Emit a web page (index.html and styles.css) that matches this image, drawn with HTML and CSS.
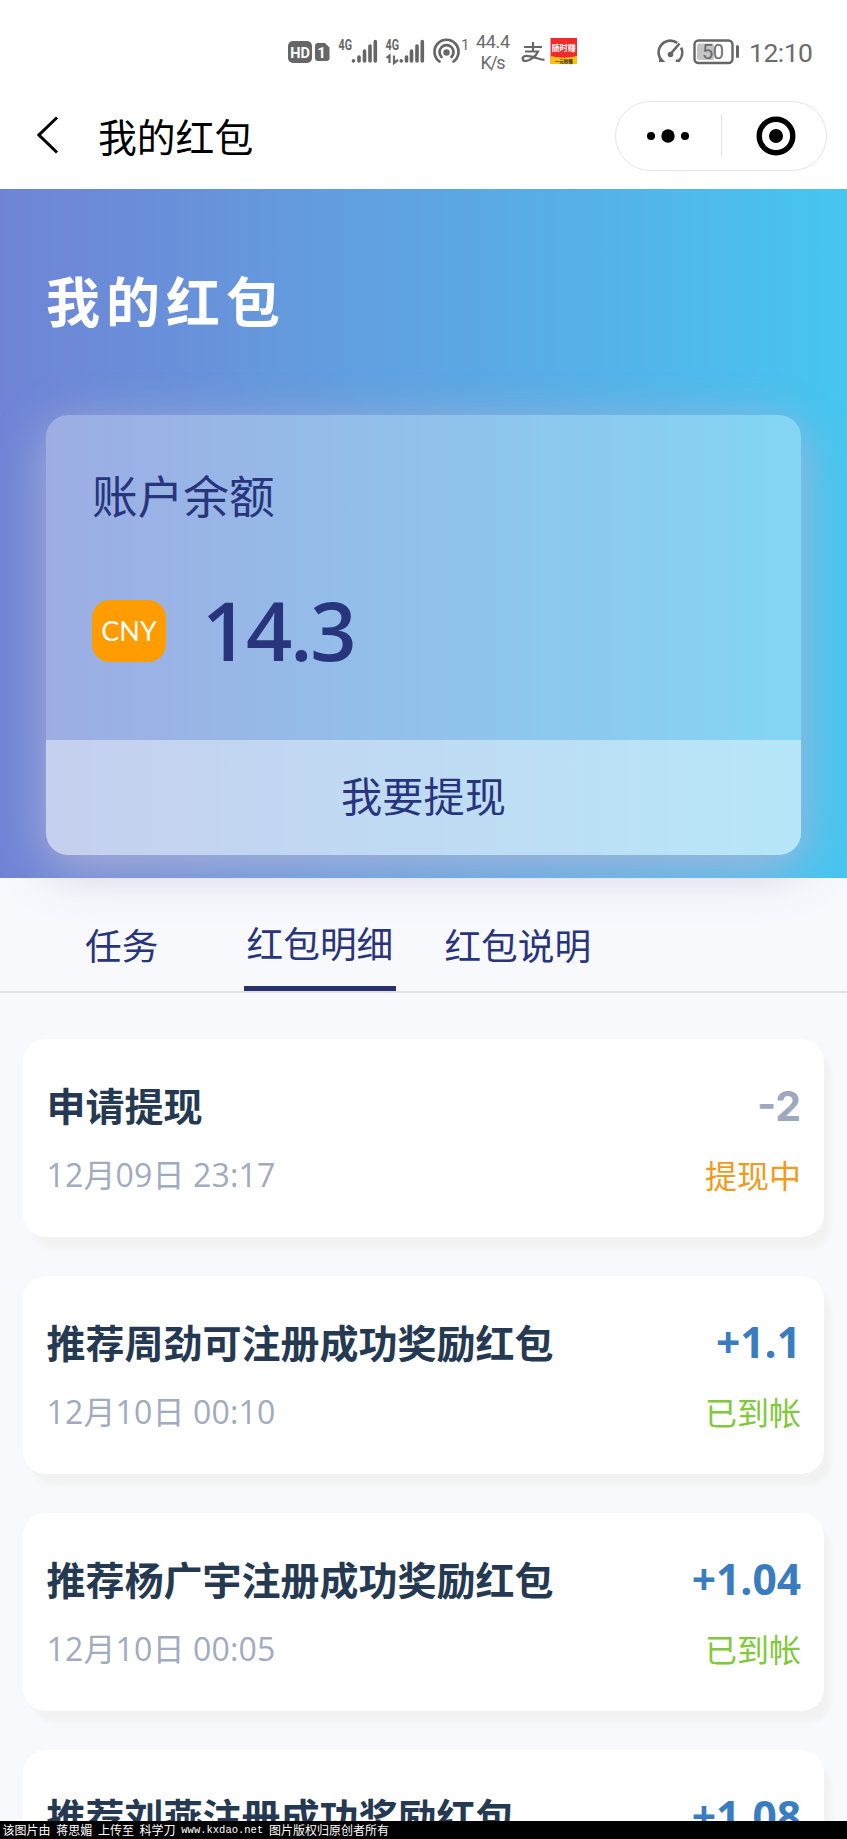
FILE: index.html
```
<!DOCTYPE html>
<html lang="zh-CN">
<head>
<meta charset="utf-8">
<title>我的红包</title>
<link rel="stylesheet" href="styles.css">
</head>
<body>
<div class="statusbar">
  <svg class="status-left" width="290" height="44" viewBox="288 30 290 44">
    <rect x="288" y="41" width="24" height="22" rx="5" fill="#666"/>
    <text x="300" y="57.500" class="badge" text-anchor="middle" font-size="14.500">HD</text>
    <path d="M318 43h7l4.500 4.500V58a3 3 0 0 1-3 3H318a3 3 0 0 1-3-3V46a3 3 0 0 1 3-3z" fill="#666"/>
    <text x="321.500" y="58" class="badge" text-anchor="middle" font-size="15">1</text>
    <text x="338.500" y="50" class="net" textLength="13.500" lengthAdjust="spacingAndGlyphs">4G</text>
    <g stroke="#666" stroke-width="3.600" stroke-linecap="round">
      <path d="M353.500 60.700v.3M359 57v4M364.500 51v10M370 46v15M375.300 41.500v19.500"/>
      <path d="M401.300 60.700v.3M406.500 57v4M411.500 51v10M417 46v15M422.300 41.500v19.500"/>
    </g>
    <text x="385.500" y="50" class="net" textLength="13.500" lengthAdjust="spacingAndGlyphs">4G</text>
    <path d="M386.500 58l3-2.500V63M394 55.500V63l4-3" fill="none" stroke="#666" stroke-width="2.200"/>
    <g fill="none" stroke="#666" stroke-width="2.700" stroke-linecap="round">
      <path d="M439.500 61.500a12 12 0 1 1 14 0"/>
      <path d="M441.500 57a7 7 0 1 1 10 0"/>
    </g>
    <circle cx="446.500" cy="52.500" r="3.200" fill="#666"/>
    <text x="461" y="50" class="light" font-size="15">1</text>
    <text x="476" y="48" class="light" font-size="18" textLength="34">44.4</text>
    <text x="480.500" y="69" class="light" font-size="18" textLength="25">K/s</text>
    <path d="M524 47h18M533 42v9M525 51.500h13c-2 5-8 9-12 9.500-4 .3-4.500-4-1-5 5-1 12 3 19.500 4" fill="none" stroke="#666" stroke-width="2.200"/>
    <rect x="550.500" y="38" width="26.500" height="26" fill="#ef2a2c"/>
    <path d="M550.500 56q13 3.500 26.500 0v8h-26.500z" fill="#ffc20e"/>
    <text x="563.700" y="51" class="app" fill="#fff" font-size="8" text-anchor="middle">随时赚</text>
    <text x="563.700" y="63" class="app" fill="#222" font-size="4.500" text-anchor="middle">一元秒赚</text>
  </svg>
  <svg class="status-right" width="156" height="44" viewBox="657 30 156 44">
    <g fill="none" stroke="#666" stroke-width="2.600">
      <path d="M659 60.800h3.200A11.700 11.700 0 0 1 677.200 42.900M681.100 47.600a11.700 11.700 0 0 1-2.300 13.200h-3"/>
      <path d="M670.500 54l9-10.500"/>
    </g>
    <circle cx="670.500" cy="54.500" r="2.800" fill="#666"/>
    <rect x="694.500" y="40.500" width="38" height="22.500" rx="4" fill="none" stroke="#666" stroke-width="2.400"/>
    <rect x="697" y="43.500" width="17" height="16.500" rx="2" fill="#c4c4c4"/>
    <text x="702" y="59" class="light" font-size="20" textLength="22">50</text>
    <rect x="736" y="45" width="3" height="13" rx="1.500" fill="#666"/>
    <text x="749" y="61.800" class="light" font-size="26.500" textLength="64">12:10</text>
  </svg>
</div>
<header class="navbar">
  <svg class="back" width="22" height="38" viewBox="0 0 22 38"><path d="M20 1.500L2 19l18 17.500" fill="none" stroke="#000" stroke-width="3"/></svg>
  <h2 class="nav-title">我的红包</h2>
  <div class="capsule">
    <svg width="42" height="14" viewBox="0 0 42 14"><circle cx="4" cy="7" r="4"/><circle cx="21" cy="7" r="6.700"/><circle cx="38" cy="7" r="4"/></svg>
    <i class="capsule-line"></i>
    <svg width="40" height="40" viewBox="0 0 40 40"><circle cx="20" cy="20" r="16.800" fill="none" stroke="#000" stroke-width="5.400"/><circle cx="20" cy="20" r="7"/></svg>
  </div>
</header>
<section class="hero">
  <h1 class="hero-title">我的红包</h1>
  <div class="balance">
    <div class="balance-main">
      <p class="balance-label">账户余额</p>
      <div class="balance-row"><span class="cny">CNY</span><span class="balance-value">14.3</span></div>
    </div>
    <div class="withdraw">我要提现</div>
  </div>
</section>
<nav class="tabs">
  <span class="tab tab-task">任务</span>
  <span class="tab tab-active">红包明细</span>
  <span class="tab">红包说明</span>
</nav>
<main class="list">
  <article class="item">
    <div class="line"><h3>申请提现</h3><b class="amount minus">-2</b></div>
    <div class="line sub"><time>12月09日 23:17</time><span class="pending">提现中</span></div>
  </article>
  <article class="item">
    <div class="line"><h3>推荐周劲可注册成功奖励红包</h3><b class="amount">+1.1</b></div>
    <div class="line sub"><time>12月10日 00:10</time><span class="done">已到帐</span></div>
  </article>
  <article class="item">
    <div class="line"><h3>推荐杨广宇注册成功奖励红包</h3><b class="amount">+1.04</b></div>
    <div class="line sub"><time>12月10日 00:05</time><span class="done">已到帐</span></div>
  </article>
  <article class="item">
    <div class="line"><h3>推荐刘燕注册成功奖励红包</h3><b class="amount">+1.08</b></div>
  </article>
</main>
<footer class="credit">
  <span>该图片由</span><span>蒋思媚</span><span>上传至</span><span>科学刀</span><span class="site">www.kxdao.net</span><span>图片版权归原创者所有</span>
</footer>
</body>
</html>
```
FILE: styles.css
```
* { box-sizing: border-box; margin: 0; padding: 0; }
body {
  width: 847px;
  height: 1839px;
  overflow: hidden;
  display: flex;
  flex-direction: column;
  background: #f8f9fd;
  color: #28357c;
  font-family: "Noto Sans CJK SC", sans-serif;
}
svg { display: block; flex: none; }
.statusbar {
  flex: none;
  height: 80px;
  padding: 30px 34px 0 288px;
  display: flex;
  justify-content: space-between;
  background: #fff;
}
.badge { font-family: Roboto, sans-serif; font-weight: 700; fill: #fff; }
.net { font-family: Roboto, sans-serif; font-weight: 700; font-size: 14px; fill: #666; }
.light { font-family: Roboto, sans-serif; font-weight: 400; fill: #6b6b6b; }
.app { font-family: "Noto Sans CJK SC", sans-serif; font-weight: 700; }

.navbar {
  flex: none;
  height: 108.5px;
  padding: 0 20px 0 37px;
  display: flex;
  align-items: center;
  background: #fff;
}
.back { margin-top: 2px; }
.nav-title { margin: 2px 0 0 39px; font-size: 38.8px; font-weight: 400; line-height: 50px; color: #000; }
.capsule {
  margin-left: auto;
  margin-top: 3px;
  width: 212px;
  height: 70px;
  border: 1px solid #e4e4e4;
  border-radius: 35px;
  display: flex;
  align-items: center;
  padding: 0 30px 0 31px;
}
.capsule-line { width: 1px; height: 43px; background: #e2e2e2; margin: 0 auto 0 32px; }

.hero {
  flex: none;
  height: 689.5px;
  padding: 75px 46px 0;
  position: relative;
  background: linear-gradient(90deg, #6f84d6 0%, #6990da 20%, #5ea5e2 50%, #54b3e8 72%, #46c6f0 100%);
}
.hero-title { font-size: 54px; letter-spacing: 6px; line-height: 72px; font-weight: 700; color: #fff; }
.balance {
  margin-top: 79px;
  height: 440px;
  border-radius: 22px;
  background: rgba(255, 255, 255, .32);
  box-shadow: 0 12px 50px rgba(187, 181, 214, .85);
  display: flex;
  flex-direction: column;
  overflow: hidden;
}
.balance-main { flex: 1; padding: 47px 46px 0; }
.balance-label { font-size: 45.7px; line-height: 64px; }
.balance-row { display: flex; align-items: center; margin-top: 55px; height: 100px; }
.cny {
  width: 74px;
  height: 62px;
  border-radius: 18px;
  background: #ff9d00;
  color: #fff;
  font: 27px/62px Lato, sans-serif;
  text-align: center;
}
.balance-value { margin-left: 36px; padding-bottom: 3px; font-family: "Open Sans", "Noto Sans", sans-serif; font-size: 81px; font-weight: 600; line-height: 97px; letter-spacing: -2.2px; }
.withdraw {
  height: 115px;
  line-height: 109px;
  text-align: center;
  font-size: 41.2px;
  background: rgba(255, 255, 255, .42);
}

.tabs {
  flex: none;
  height: 115px;
  padding-left: 85px;
  display: flex;
  align-items: flex-end;
  border-bottom: 2px solid #e0e1e4;
  font-size: 36.7px;
}
.tab { height: 88px; line-height: 54px; padding-top: 14px; }
.tab-task { margin-right: 85.5px; }
.tab-active { width: 152px; text-align: center; margin-right: 48.5px; padding-top: 12px; border-bottom: 5px solid #28326e; white-space: nowrap; }

.list { flex: 1; min-height: 0; padding: 46px 23px 0; overflow: hidden; }
.item {
  height: 198px;
  margin-bottom: 39px;
  padding: 38px 23px 0;
  border-radius: 23px;
  background: #fff;
  box-shadow: 8px 12px 5px -1px #f2f2f2;
}
.line { display: flex; justify-content: space-between; align-items: center; height: 54px; }
.line h3 { font-size: 39px; line-height: 54px; font-weight: 700; color: #253a52; white-space: nowrap; padding-left: .5px; }
.amount { font: 700 42.5px/54px "Open Sans", "Noto Sans", sans-serif; color: #397dc0; padding-top: 2px; }
.minus { font-family: Inter, sans-serif; font-size: 41px; padding-top: 4px; color: #9da9c0; }
.sub { margin-top: 16px; height: 54px; font-size: 32px; line-height: 52px; }
.sub time { font-family: "Open Sans", "Noto Sans CJK SC", sans-serif; color: #a0abc0; padding: 2px 0 0 .5px; letter-spacing: .15px; }
.pending { color: #f09b1c; }
.done { color: #7fc93a; }

.credit {
  flex: none;
  height: 18px;
  padding-left: 2.500px;
  display: flex;
  align-items: center;
  gap: 5.700px;
  background: #000;
  color: #fff;
  font-size: 12px;
  line-height: 18px;
  white-space: nowrap;
}
.site { font-family: "Liberation Mono", monospace; font-size: 10.500px; }
```
